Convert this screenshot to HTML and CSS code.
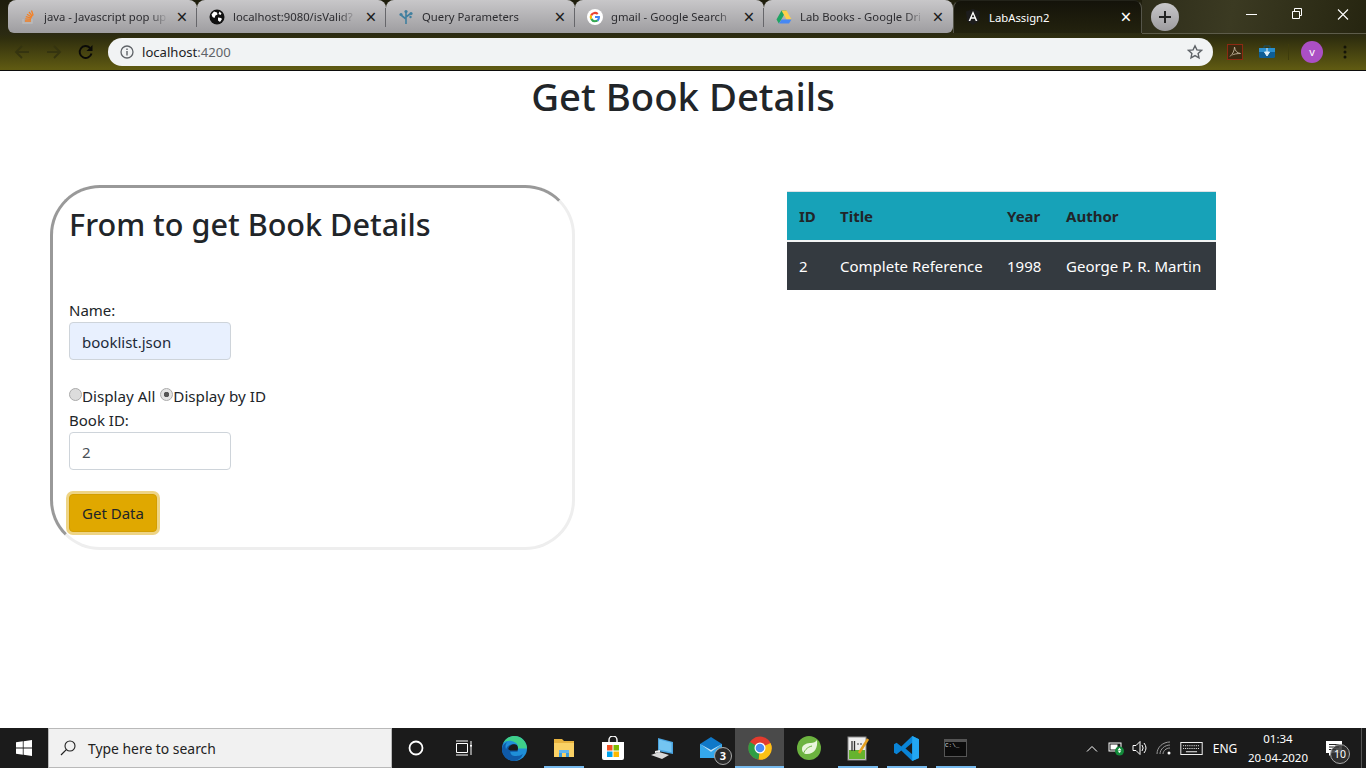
FILE: index.html
```html
<!DOCTYPE html>
<html lang="en">
<head>
    <meta charset="UTF-8">
    <title>LabAssign2</title>
    <link rel="stylesheet" href="styles.css">
</head>
<body>
    <header class="browser">
        <div class="tabstrip">
            <div class="tab">
                <svg class="favicon" viewBox="0 0 16 16"><path d="M3 10v4h9v-4" fill="none" stroke="#bcbbbb" stroke-width="1.4"/><path d="M5 12h6M5.200 9.800l5.800.6M5.800 7.600l5.600 1.600M7 5.200l5 3M9 3l3.400 4.400M11.500 1.500l1.700 5" fill="none" stroke="#f48024" stroke-width="1.300"/></svg>
                <span class="tab-title">java - Javascript pop up</span>
                <span class="tab-close">&times;</span>
            </div>
            <div class="tab">
                <svg class="favicon" viewBox="0 0 16 16"><circle cx="8" cy="8" r="7.500" fill="#111"/><path d="M5 2.500l3 1 .5 2-2 1-1 2.500-2-1-1-2.500zM9 8.500l3 .5 1 1-2 3-2-1.500zM10.500 2.500l2 2-1 1.500-2-1z" fill="#fff"/></svg>
                <span class="tab-title">localhost:9080/isValid?</span>
                <span class="tab-close">&times;</span>
            </div>
            <div class="tab">
                <svg class="favicon" viewBox="0 0 16 16"><path d="M8 15V3M8 10L3.500 6.500M8 8l4-3" fill="none" stroke="#3f7f9f" stroke-width="1.600"/><circle cx="8" cy="2.500" r="1.600" fill="#3f7f9f"/><circle cx="3" cy="5.500" r="1.600" fill="#3f7f9f"/><circle cx="13" cy="4.500" r="1.600" fill="#3f7f9f"/><circle cx="12.500" cy="8" r="1.200" fill="#3f7f9f"/></svg>
                <span class="tab-title">Query Parameters</span>
                <span class="tab-close">&times;</span>
            </div>
            <div class="tab">
                <svg class="favicon" viewBox="0 0 16 16"><circle cx="8" cy="8" r="8" fill="#fff"/><path d="M12.800 6.900H8v2.200h2.800a3 3 0 0 1-1.300 1.900l1.700 1.400c1.100-1 1.800-2.500 1.800-4.300 0-.4 0-.8-.2-1.200z" fill="#4285f4"/><path d="M8 13.200c1.400 0 2.500-.4 3.200-1.200l-1.700-1.300c-.4.300-1 .5-1.500.5-1.300 0-2.500-.9-2.900-2.100L3.300 10.400A5.200 5.200 0 0 0 8 13.200z" fill="#34a853"/><path d="M5.100 9.100a3 3 0 0 1 0-2.100L3.300 5.600a5.200 5.200 0 0 0 0 4.800z" fill="#fbbc05"/><path d="M8 5c.8 0 1.500.3 2 .8l1.500-1.500A5.200 5.200 0 0 0 3.300 5.600L5.100 7A3 3 0 0 1 8 5z" fill="#ea4335"/></svg>
                <span class="tab-title">gmail - Google Search</span>
                <span class="tab-close">&times;</span>
            </div>
            <div class="tab tab-last">
                <svg class="favicon" viewBox="0 0 16 16"><path d="M5.500 1.500h5L5.300 10.500 2.800 14.500 0.500 10.500z" fill="#1fa463"/><path d="M5.500 1.500h5l5 9h-5z" fill="#ffd04b"/><path d="M3 14.500l2.600-4h9.900l-2.500 4z" fill="#4688f4"/></svg>
                <span class="tab-title">Lab Books - Google Dri</span>
                <span class="tab-close">&times;</span>
            </div>
            <div class="tab tab-active">
                <svg class="favicon" viewBox="0 0 16 16"><path d="M8 0L1 2.500 2 12l6 4 6-4 1-9.500z" fill="#1d1d1d"/><path d="M8 2L3.600 12h1.700l.9-2.300h3.600l.9 2.300h1.700zm-1.300 6.300L8 5.200l1.300 3.100z" fill="#fff"/></svg>
                <span class="tab-title">LabAssign2</span>
                <span class="tab-close">&times;</span>
            </div>
            <div class="tabstrip-rest">
                <span class="new-tab"><svg viewBox="0 0 14 14" width="14" height="14"><path d="M7 1v12M1 7h12" stroke="#222" stroke-width="2"/></svg></span>
                <div class="window-controls">
                    <svg viewBox="0 0 46 30" width="46" height="30"><path d="M18 14.500h11" stroke="#fff"/></svg>
                    <svg viewBox="0 0 46 30" width="46" height="30"><path d="M18.500 11.500h7v7h-7zM20.500 11v-2.500h7v7H26" fill="none" stroke="#fff"/></svg>
                    <svg viewBox="0 0 46 30" width="46" height="30"><path d="M18 9.500l10 10M28 9.500l-10 10" stroke="#fff" stroke-width="1.100"/></svg>
                </div>
            </div>
        </div>
        <div class="toolbar">
            <svg class="tool-icon" viewBox="0 0 16 16"><path d="M15 8H2M8 2L2 8l6 6" fill="none" stroke="#35340f" stroke-width="1.800"/></svg>
            <svg class="tool-icon" viewBox="0 0 16 16"><path d="M1 8h13M8 2l6 6-6 6" fill="none" stroke="#35340f" stroke-width="1.800"/></svg>
            <svg class="tool-icon" viewBox="0 0 16 16"><path d="M13.500 9.500A6 6 0 1 1 12 3.800" fill="none" stroke="#0b0b08" stroke-width="1.900"/><path d="M14.500 1v6h-6z" fill="#0b0b08"/></svg>
            <div class="omnibox">
                <svg class="info-icon" viewBox="0 0 14 14"><circle cx="7" cy="7" r="6" fill="none" stroke="#5f6368" stroke-width="1.300"/><path d="M7 6v4.500M7 3.500v1.500" stroke="#5f6368" stroke-width="1.400"/></svg>
                <span class="url">localhost<span class="url-port">:4200</span></span>
                <svg class="star-icon" viewBox="0 0 16 16"><path d="M8 1.800l1.900 4.100 4.500.5-3.300 3 .9 4.500L8 11.600l-4 2.300.9-4.500-3.300-3 4.500-.5z" fill="none" stroke="#5f6368" stroke-width="1.400"/></svg>
            </div>
            <span class="ext ext-pdf"><svg viewBox="0 0 16 16" width="16" height="16"><rect x=".5" y=".5" width="15" height="15" fill="#3a2a10" stroke="#8c2a12"/><path d="M3 12.500C6 10 7.500 6 7.500 3c.5 4 2.500 6 6 6.500-3 0-7 .5-8 1.500" fill="none" stroke="#b9ab92"/></svg></span>
            <span class="ext ext-box"><svg viewBox="0 0 16 14" width="16" height="14"><path d="M5 3V1h6v2" fill="none" stroke="#15506f"/><rect y="3" width="16" height="10" rx="1.500" fill="#0e5e96"/><rect y="3" width="16" height="4" fill="#2a8fcf"/><path d="M8 3v6M5.500 7L8 11l2.500-4z" fill="#dff1fb" stroke="#dff1fb"/></svg></span>
            <span class="toolbar-sep"></span>
            <span class="avatar">v</span>
            <svg class="menu-dots" viewBox="0 0 4 16"><circle cx="2" cy="3" r="1.500"/><circle cx="2" cy="8" r="1.500"/><circle cx="2" cy="13" r="1.500"/></svg>
        </div>
    </header>

    <main class="page">
        <h1 class="page-title">Get Book Details</h1>
        <div class="columns">
            <form class="book-form">
                <h2>From to get Book Details</h2>
                <label class="field-label" for="name">Name:</label>
                <input class="field field-filled" id="name" type="text" value="booklist.json">
                <div class="radios">
                    <input type="radio" name="mode" id="all"><label for="all">Display All</label>
                    <input type="radio" name="mode" id="byid" checked><label for="byid">Display by ID</label>
                </div>
                <label class="field-label" for="bookid">Book ID:</label>
                <input class="field" id="bookid" type="text" value="2">
                <button class="get-btn" type="button">Get Data</button>
            </form>
            <table class="book-table">
                <thead>
                    <tr><th class="col-id">ID</th><th class="col-title">Title</th><th class="col-year">Year</th><th class="col-author">Author</th></tr>
                </thead>
                <tbody>
                    <tr><td>2</td><td>Complete Reference</td><td>1998</td><td>George P. R. Martin</td></tr>
                </tbody>
            </table>
        </div>
    </main>

    <footer class="taskbar">
        <span class="start"><svg viewBox="0 0 16 16" width="16" height="16"><path d="M0 2.300l6.800-1v6.300H0zM7.600 1.200L16 0v7.600H7.600zM0 8.400h6.800v6.300l-6.800-1zM7.600 8.400H16V16l-8.400-1.200z" fill="#fff"/></svg></span>
        <div class="search">
            <svg viewBox="0 0 16 16" width="16" height="16"><circle cx="10" cy="6" r="5" fill="none" stroke="#222" stroke-width="1.100"/><path d="M6.300 9.700L1 15" stroke="#222" stroke-width="1.200"/></svg>
            <span>Type here to search</span>
        </div>
        <span class="sys-btn"><svg viewBox="0 0 16 16" width="16" height="16"><circle cx="8" cy="8" r="6.500" fill="none" stroke="#fff" stroke-width="1.800"/></svg></span>
        <span class="sys-btn"><svg viewBox="0 0 18 16" width="18" height="16"><path d="M1.500 3.500h11v9h-11zM1 1h12M1 15h12M16 1v3M16 6v9" fill="none" stroke="#fff"/><rect x="15" y="4.500" width="2" height="2" fill="#fff"/></svg></span>
        <div class="apps">
            <span class="app"><svg viewBox="0 0 24 24" width="25" height="25"><circle cx="12" cy="12" r="12" fill="#1f8fd8"/><path d="M24 12c0-6-5-12-12-12C7 0 3 3 1 7c3-3 8-3 11-1 3 1 4 4 3 6h9z" fill="#3fd08a"/><path d="M15 15H8c0 3 3 5 7 4 2 0 4-1 5-2-1 4-5 7-9 7-6 0-11-5-11-11 0-3 2-6 5-7-2 2-2 5-1 7 0-3 4-6 8-5 3 1 3 4 3 7z" fill="#0f5aa8"/><path d="M6 13c0-3 3-5 6-5s4 3 3 6H8c-1-1-2-1-2-1z" fill="#1b1b1b"/></svg></span>
            <span class="app app-open"><svg viewBox="0 0 24 24" width="24" height="24"><path d="M2 3h8l2 2h10v16H2z" fill="#e8b33f"/><rect x="2" y="7" width="20" height="14" fill="#fad165"/><path d="M7 21v-7h10v7h-3v-4h-4v4z" fill="#3a9bdc"/><rect x="7" y="14" width="10" height="3" fill="#62b6ee"/></svg></span>
            <span class="app"><svg viewBox="0 0 24 24" width="24" height="24"><path d="M8 7V4a4 4 0 0 1 8 0v3" fill="none" stroke="#fff" stroke-width="1.400"/><path d="M1 6h22v16a2 2 0 0 1-2 2H3a2 2 0 0 1-2-2z" fill="#fff"/><rect x="6" y="9" width="5.500" height="5.500" fill="#f25022"/><rect x="12.500" y="9" width="5.500" height="5.500" fill="#7fba00"/><rect x="6" y="15.500" width="5.500" height="5.500" fill="#00a4ef"/><rect x="12.500" y="15.500" width="5.500" height="5.500" fill="#ffb900"/></svg></span>
            <span class="app"><svg viewBox="0 0 24 24" width="26" height="24"><path d="M8 2l15 4v12l-15-3z" fill="#4aa3df"/><path d="M9 3.500l12.500 3.300v9.500L9 13.500z" fill="#74c5f2"/><path d="M1 19l8-3 10 3-7 4z" fill="#d9d9d9"/><path d="M5 15l5-1v2l-5 1z" fill="#eee"/></svg></span>
            <span class="app"><svg viewBox="0 0 24 24" width="24" height="24"><path d="M1 8L12 1l11 7v14H1z" fill="#0f78c8"/><path d="M1 8l11 8 11-8v14H1z" fill="#35a8ec"/><path d="M1 8l11 8 11-8-11 6z" fill="#bde3f8"/></svg><span class="count-badge">3</span></span>
            <span class="app app-active"><svg viewBox="0 0 24 24" width="24" height="24"><circle cx="12" cy="12" r="11.500" fill="#e33b2e"/><path d="M12 12L22.500 7a11.500 11.500 0 0 1-12 16.500z" fill="#fbc116"/><path d="M12 12L10.500 23.500A11.500 11.500 0 0 1 2 6z" fill="#2f9e44"/><circle cx="12" cy="12" r="5.500" fill="#fff"/><circle cx="12" cy="12" r="4.300" fill="#4a8af4"/></svg></span>
            <span class="app"><svg viewBox="0 0 24 24" width="24" height="24"><circle cx="12" cy="12" r="12" fill="#6cb33f"/><path d="M20 4c1 7-2 14-10 14-3 0-5-2-5-5 0-5 6-6 9-6 2 0 5-1 6-3z" fill="#e9f5dc"/><path d="M6 19c1-4 4-8 9-9" fill="none" stroke="#6cb33f"/></svg></span>
            <span class="app app-open"><svg viewBox="0 0 24 24" width="24" height="26"><rect x="2" y="1" width="18" height="23" fill="#eee" stroke="#8a8a8a"/><rect x="3" y="14" width="16" height="9" fill="#66b32e"/><path d="M6 5v10M8.500 5v10" stroke="#333" stroke-width="1.300"/><path d="M11 8h5" stroke="#777" stroke-width="1.500" stroke-dasharray="2 1"/><path d="M13 17L22 3" stroke="#e6a020" stroke-width="2.500"/></svg></span>
            <span class="app app-open"><svg viewBox="0 0 24 24" width="25" height="25"><path d="M17.500 0L24 3v18l-6.500 3L7 14l-4.500 3.500L0 16v-8l2.500-1.500L7 10zM17.500 6.500L11 12l6.500 5.500z" fill="#0a84d6"/><path d="M17.500 0L24 3v18l-6.500 3z" fill="#23a7f2"/></svg></span>
            <span class="app app-open"><span class="cmd-icon"><span class="cmd-text">C:\_</span></span></span>
        </div>
        <div class="tray">
            <span class="tray-item tray-chev"><svg viewBox="0 0 12 7" width="12" height="7"><path d="M1 6.500l5-5 5 5" fill="none" stroke="#fff"/></svg></span>
            <span class="tray-item tray-bat"><svg viewBox="0 0 16 16" width="16" height="16"><rect x="1" y="3" width="12" height="8" fill="#1b1b1b" stroke="#fff"/><rect x="2.500" y="4.500" width="7" height="5" fill="#fff"/><circle cx="11.500" cy="11" r="4.500" fill="#128a3a"/><path d="M11.500 7.800l2 2.500h-4zM10 10.800h3l-1 2h-1z" fill="#fff"/></svg></span>
            <span class="tray-item tray-vol"><svg viewBox="0 0 16 16" width="16" height="16"><path d="M1 5.500h3l4-4v13l-4-4H1z" fill="none" stroke="#fff"/><path d="M10 5a5 5 0 0 1 0 6M12 3a8 8 0 0 1 0 10" fill="none" stroke="#fff"/></svg></span>
            <span class="tray-item tray-wifi"><svg viewBox="0 0 16 16" width="16" height="16"><path d="M1 14C1 7 7 2 14 2M4 14c0-5 5-9 10-9M7 14c0-3 3-6 7-6" fill="none" stroke="#9a9a9a"/><circle cx="13" cy="13" r="1.500" fill="#fff"/></svg></span>
            <span class="tray-item tray-kbd"><svg viewBox="0 0 24 14" width="23" height="13"><rect x=".5" y=".5" width="23" height="13" fill="none" stroke="#fff"/><path d="M3 4h18M3 7h18" stroke="#fff" stroke-dasharray="1 1"/><path d="M6 10.500h12" stroke="#fff"/></svg></span>
            <span class="tray-item tray-lang">ENG</span>
            <span class="tray-item tray-clock"><span>01:34</span><span>20-04-2020</span></span>
            <span class="tray-item tray-notif"><svg viewBox="0 0 16 15" width="16" height="15"><path d="M0 0h16v12H6l-3 3v-3H0z" fill="#fff"/><path d="M3 3.500h10M3 6h10M3 8.500h7" stroke="#222"/></svg><span class="count-badge notif-badge">10</span></span>
            <span class="show-desktop"></span>
        </div>
    </footer>
</body>
</html>
```

FILE: styles.css
```css
body, html {
    height: 100%;
    margin: 0;
    overflow: hidden;
}
body {
    display: flex;
    flex-direction: column;
    font-family: "Noto Sans", "Open Sans", sans-serif;
    color: #212529;
    background: #fff;
}

/* browser chrome */
.browser {
    height: 71px;
    flex: none;
    background: linear-gradient(#1e1d0c 0, #2b2a12 34px, #2f2e0e 38px, #5f5a12 69px, #5f5a12 70px);
    border-bottom: 1px solid #0c0c0c;
    box-sizing: border-box;
}
.tabstrip {
    display: flex;
    height: 38px;
    padding-left: 8px;
}
.tab {
    width: 189px;
    height: 33px;
    box-sizing: border-box;
    flex: none;
    display: flex;
    align-items: center;
    padding: 0 7px 0 12px;
    background: linear-gradient(#c8c7c9, #9e9da0);
    border-radius: 8px 8px 0 0;
    color: #2c2c30;
    font-size: 11.300px;
    position: relative;
}
.tab:first-child {
    border-bottom-left-radius: 6px;
}
.tab:not(.tab-last):not(.tab-active)::after {
    content: "";
    position: absolute;
    right: 0;
    top: 8px;
    height: 19px;
    width: 1px;
    background: #66666a;
}
.tab-last {
    border-bottom-right-radius: 6px;
}
.tab-active {
    background: linear-gradient(#14130a, #23220e);
    color: #fff;
    border: 1px solid #55554a;
    border-bottom: 0;
    border-top-color: #23231a;
    padding-left: 11px;
}
.favicon {
    width: 16px;
    height: 16px;
    flex: none;
    margin-right: 8px;
}
.tab-title {
    flex: 1;
    min-width: 0;
    overflow: hidden;
    white-space: nowrap;
    -webkit-mask-image: linear-gradient(to right, #000 85%, transparent 100%);
}
.tab-active .tab-title {
    -webkit-mask-image: none;
}
.tab-close {
    width: 16px;
    margin-left: 6px;
    text-align: center;
    font-size: 19px;
    line-height: 16px;
    color: #1c1c1c;
}
.tab-active .tab-close {
    color: #fff;
}
.tabstrip-rest {
    flex: 1;
    height: 33px;
    display: flex;
    border-bottom: 1px solid #5d5c4a;
    background: linear-gradient(100deg, #2e2d1a, #3b3a22 40%, #262510);
}
.new-tab {
    width: 28px;
    height: 28px;
    margin: 3px 0 0 9px;
    border-radius: 50%;
    background: linear-gradient(#c9c8ca, #9c9b9e);
    display: flex;
    align-items: center;
    justify-content: center;
}
.window-controls {
    margin-left: auto;
    display: flex;
}
.toolbar {
    height: 28px;
    display: flex;
    align-items: center;
    padding-left: 14px;
}
.tool-icon {
    width: 16px;
    height: 16px;
    flex: none;
    margin-right: 16px;
}
.tool-icon:nth-child(3) {
    margin-right: 14px;
}
.omnibox {
    flex: none;
    width: 1105px;
    height: 28px;
    border-radius: 14px;
    background: #f1f3f4;
    display: flex;
    align-items: center;
    padding: 0 10px 0 12px;
    box-sizing: border-box;
}
.info-icon {
    width: 14px;
    height: 14px;
    margin-right: 8px;
}
.url {
    font-size: 13.100px;
    color: #202124;
    flex: 1;
}
.url-port {
    color: #5f6368;
}
.star-icon {
    width: 16px;
    height: 16px;
}
.ext {
    display: flex;
    width: 16px;
    justify-content: center;
    margin-left: 16px;
}
.ext-pdf {
    margin-left: 14px;
}
.toolbar-sep {
    width: 1px;
    height: 16px;
    background: #3e3c0c;
    margin: 0 0 0 13px;
}
.avatar {
    width: 22px;
    height: 22px;
    margin-left: 12px;
    border-radius: 50%;
    background: #ab4fc4;
    color: #fff;
    font-size: 11px;
    text-align: center;
    line-height: 21px;
}
.menu-dots {
    width: 4px;
    height: 16px;
    margin-left: 20px;
    fill: #141408;
}

/* page */
.page {
    flex: 1;
    min-height: 0;
}
.page-title {
    margin: 1px 0 65px;
    font-size: 38.300px;
    font-weight: 500;
    line-height: 48px;
    text-align: center;
}
.columns {
    display: flex;
    align-items: flex-start;
    padding-left: 50px;
    gap: 212px;
}
.book-form {
    width: 525px;
    height: 365px;
    box-sizing: border-box;
    padding: 17px 16px 0;
    border: 3px solid #eee;
    border-top-color: #999;
    border-left-color: #999;
    border-radius: 50px;
    font-size: 15px;
}
.book-form h2 {
    margin: 0 0 55px;
    font-size: 30.600px;
    font-weight: 500;
    line-height: 38px;
}
.field-label {
    display: block;
    line-height: 24px;
}
.field {
    display: block;
    width: 162px;
    height: 38px;
    box-sizing: border-box;
    padding: 7px 12px 5px;
    border: 1px solid #ced4da;
    border-radius: 4px;
    font: inherit;
    color: #495057;
}
.field-filled {
    background: #e8f0fe;
    color: #1c2a3a;
}
.radios {
    display: flex;
    align-items: center;
    height: 24px;
    margin-top: 24px;
    font-size: 15.200px;
}
.radios input {
    appearance: none;
    width: 13px;
    height: 13px;
    margin: -3px 0 0;
    border-radius: 50%;
    border: 1px solid #aaa;
    background: #dcdcdc;
    box-sizing: border-box;
    flex: none;
}
.radios input:checked {
    background: radial-gradient(circle, #555 0, #555 2.500px, #e4e4e4 3px);
}
.radios label {
    margin-right: 5px;
}
.get-btn {
    display: block;
    width: 88px;
    height: 38px;
    margin-top: 24px;
    padding: 0;
    border: 1px solid #d39e00;
    border-radius: 4px;
    background: #e0a800;
    box-shadow: 0 0 0 3px rgba(222, 170, 12, .5);
    color: #212529;
    font: inherit;
}
.book-table {
    width: 429px;
    margin-top: 6px;
    table-layout: fixed;
    border-collapse: separate;
    border-spacing: 0;
    font-size: 15px;
}
.book-table th, .book-table td {
    padding: 0 0 0 12px;
    text-align: left;
    white-space: nowrap;
    box-sizing: border-box;
}
.book-table th {
    height: 51px;
    background: #17a2b8;
    font-weight: 700;
    border-top: 1px solid #dee2e6;
    border-bottom: 2px solid #f2f4f5;
}
.book-table td {
    height: 48px;
    background: #343a40;
    color: #fff;
}
.col-id { width: 41px; }
.col-title { width: 167px; }
.col-year { width: 59px; }
.col-author { width: 162px; }

/* taskbar */
.taskbar {
    height: 40px;
    flex: none;
    display: flex;
    background: #1b1b1b;
    color: #fff;
}
.start {
    width: 48px;
    display: flex;
    align-items: center;
    justify-content: center;
}
.search {
    width: 344px;
    box-sizing: border-box;
    background: #f1f1f1;
    border: 1px solid #b9b9b9;
    color: #222;
    display: flex;
    align-items: center;
    padding-left: 11px;
    gap: 12px;
    font-size: 13.900px;
}
.sys-btn {
    width: 48px;
    display: flex;
    align-items: center;
    justify-content: center;
}
.apps {
    display: flex;
    margin-left: 2px;
}
.app {
    width: 49px;
    display: flex;
    align-items: center;
    justify-content: center;
    position: relative;
    box-sizing: border-box;
}
.app-open::after {
    content: "";
    position: absolute;
    left: 5px;
    right: 4px;
    bottom: 0;
    height: 2px;
    background: #76b9ed;
}
.app-active {
    background: #4a4a4a;
    box-shadow: inset 0 -2px 0 #76b9ed;
}
.count-badge {
    position: absolute;
    right: 3px;
    bottom: 3px;
    width: 16px;
    height: 16px;
    border-radius: 50%;
    background: #2b2b2b;
    border: 1px solid #aaa;
    color: #fff;
    font-size: 11px;
    font-weight: 700;
    line-height: 16px;
    text-align: center;
}
.cmd-icon {
    width: 23px;
    height: 18px;
    box-sizing: border-box;
    background: #0c0c0c;
    border: 1px solid #555;
    border-top-width: 3px;
    overflow: hidden;
}
.cmd-text {
    display: block;
    font-family: "Liberation Mono", monospace;
    font-size: 6px;
    line-height: 7px;
    color: #ddd;
}
.tray {
    margin-left: auto;
    display: flex;
    font-size: 12px;
}
.tray-item {
    display: flex;
    align-items: center;
    justify-content: center;
}
.tray-chev { width: 25px; }
.tray-bat, .tray-vol, .tray-wifi { width: 24px; }
.tray-kbd { width: 30px; }
.tray-lang { width: 38px; }
.tray-clock {
    width: 68px;
    flex-direction: column;
    font-size: 11.500px;
    line-height: 19px;
    white-space: nowrap;
}
.tray-notif {
    width: 49px;
    padding-right: 5px;
    box-sizing: border-box;
    position: relative;
}
.notif-badge {
    right: 11px;
    bottom: 4px;
    width: 18px;
    height: 18px;
    line-height: 18px;
    font-size: 10.500px;
    font-weight: 400;
    background: rgba(50, 50, 50, .85);
}
.show-desktop {
    width: 4px;
    border-left: 1px solid #555;
}
```
